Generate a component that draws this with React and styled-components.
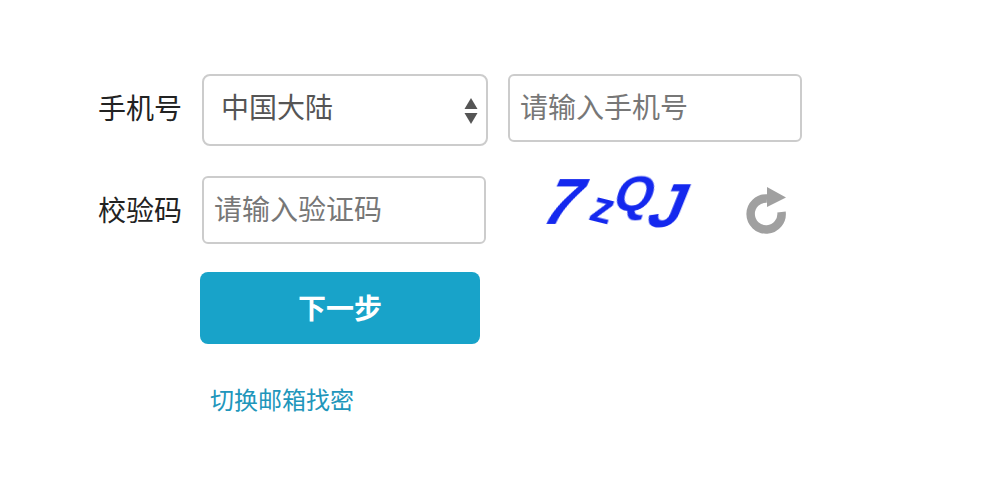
import React from "react";
import styled, { createGlobalStyle } from "styled-components";

const GlobalStyle = createGlobalStyle`
body{
    margin:0;
    background:#fff;
    font-family:"Liberation Sans","Noto Sans CJK SC",sans-serif;
}
`;
const FormWrap = styled.div`
width:990px;
height:496px;
box-sizing:border-box;
padding:74px 0 0 98px;
overflow:hidden;
`;
const Row = styled.div`
display:flex;
align-items:flex-start;
margin-bottom:${props => props.$gap}px;
`;
const Label = styled.label`
width:84px;
margin-right:20px;
font-size:28px;
line-height:72px;
height:68px;
color:#222;
white-space:nowrap;
`;
const SelectBox = styled.div`
box-sizing:border-box;
width:286px;
height:72px;
margin-right:20px;
padding:0 0 9px 17px;
display:flex;
align-items:center;
justify-content:space-between;
background:#fff;
border:2px solid #ccc;
border-radius:8px;
font-size:28px;
color:#555;
`;
const Arrows = styled.svg`
width:14px;
height:26px;
margin:11px 8px 0 0;
`;
const Input = styled.input`
box-sizing:border-box;
width:${props => props.$width}px;
height:68px;
padding:2px 0 0 10px;
background:#fff;
border:2px solid #ccc;
border-radius:6px;
outline:none;
font-family:inherit;
font-size:28px;
color:#555;
&::placeholder{
    color:#777;
    opacity:1;
}
`;
const Captcha = styled.div`
box-sizing:border-box;
width:150px;
height:64px;
margin:-10px 0 0 52px;
padding-left:9px;
display:flex;
align-items:center;
font-weight:bold;
color:#1428ee;
`;
const CaptchaChar = styled.span`
display:inline-block;
flex:none;
font-size:${props => props.$size}px;
line-height:1;
margin-right:${props => props.$gap}px;
transform:translateY(${props => props.$y}px) rotate(${props => props.$rotate}deg) skewX(${props => props.$skew}deg);
filter:blur(0.6px);
`;
const Refresh = styled.svg`
width:42px;
height:48px;
margin:11px 0 0 58px;
`;
const ButtonRow = styled.div`
margin-left:102px;
`;
const NextButton = styled.button`
display:block;
width:280px;
height:72px;
padding:0 0 2px;
border:none;
border-radius:8px;
background:#18a3c9;
color:#fff;
font-family:inherit;
font-size:28px;
font-weight:bold;
`;
const SwitchLink = styled.a`
display:block;
margin:39px 0 0 10px;
font-size:24px;
line-height:36px;
color:#2196bb;
text-decoration:none;
`;

export default function App(){
    return(
        <FormWrap>
            <GlobalStyle/>
            <Row $gap={30}>
                <Label>手机号</Label>
                <SelectBox>
                    中国大陆
                    <Arrows viewBox="0 0 14 26">
                        <path d="M7 0L13.5 11H0.5Z" fill="#555"/>
                        <path d="M7 26L13.5 15H0.5Z" fill="#555"/>
                    </Arrows>
                </SelectBox>
                <Input $width={294} placeholder="请输入手机号"/>
            </Row>
            <Row $gap={28}>
                <Label>校验码</Label>
                <Input $width={284} placeholder="请输入验证码"/>
                <Captcha>
                    <CaptchaChar $size={64} $gap={9} $y={4} $rotate={0} $skew={-24}>7</CaptchaChar>
                    <CaptchaChar $size={44} $gap={2} $y={10} $rotate={14} $skew={-6}>z</CaptchaChar>
                    <CaptchaChar $size={50} $gap={-3} $y={-4} $rotate={0} $skew={-18}>Q</CaptchaChar>
                    <CaptchaChar $size={62} $gap={0} $y={8} $rotate={0} $skew={-22}>J</CaptchaChar>
                </Captcha>
                <Refresh viewBox="0 0 42 48">
                    <path d="M35.5 25A15.5 15.5 0 1 1 21 11.5" fill="none" stroke="#a0a0a0" strokeWidth="8.5"/>
                    <path d="M21 0L40 10.5L21 20Z" fill="#a0a0a0"/>
                </Refresh>
            </Row>
            <ButtonRow>
                <NextButton>下一步</NextButton>
                <SwitchLink>切换邮箱找密</SwitchLink>
            </ButtonRow>
        </FormWrap>
    );
}
